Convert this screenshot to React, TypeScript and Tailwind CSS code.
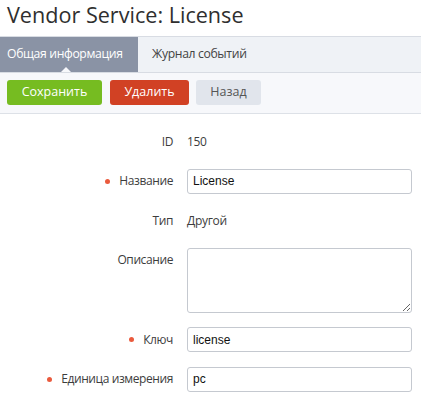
import React from "react";

type Field = {
  label: string;
  required?: boolean;
  value?: string;
  kind: "text" | "input" | "textarea";
};

const fields: Field[] = [
  { label: "ID", value: "150", kind: "text" },
  { label: "Название", value: "License", kind: "input", required: true },
  { label: "Тип", value: "Другой", kind: "text" },
  { label: "Описание", value: "", kind: "textarea" },
  { label: "Ключ", value: "license", kind: "input", required: true },
  { label: "Единица измерения", value: "pc", kind: "input", required: true },
];

const FieldRow = ({ field }: { field: Field }) => {
  return (
    <div className="flex items-start">
      <div className="w-[173px] h-[25px] flex items-center justify-end text-[12px] tracking-[-0.4px] text-[#3d3d3d]">
        {field.required && (
          <span className="w-[5px] h-[5px] rounded-full bg-[#ea5a3d] mr-[9px]"></span>
        )}
        <span>{field.label}</span>
      </div>
      <div className="ml-[14px] w-[225px]">
        {field.kind === "text" && (
          <div className="h-[25px] flex items-center text-[12px] tracking-[-0.3px] text-[#3d3d3d]">{field.value}</div>
        )}
        {field.kind === "input" && (
          <input
            className="block w-full h-[25px] px-[5px] border border-[#c5c9d0] rounded-[3px] bg-white text-[12px] text-[#111] font-['Liberation_Sans',Arial,sans-serif] outline-none"
            defaultValue={field.value}
          />
        )}
        {field.kind === "textarea" && (
          <textarea
            className="block w-full h-[65px] px-[5px] py-[3px] border border-[#c5c9d0] rounded-[3px] bg-white text-[12px] outline-none"
            defaultValue={field.value}
          />
        )}
      </div>
    </div>
  );
};

export default function App() {
  return (
    <div className="w-[421px] h-[401px] overflow-hidden bg-white font-['Open_Sans',sans-serif]">
      <h1 className="h-[36px] pl-[7px] text-[21.6px] leading-[30px] text-[#2f2f2f]">
        Vendor Service: License
      </h1>

      <div className="flex h-[37px] bg-[#eff2f6] border-y border-[#d8dce3]">
        <div className="relative w-[138px] flex items-center pl-[7px] bg-[#8a93a5] text-white text-[12.2px] tracking-[-0.35px]">
          Общая информация
          <span className="absolute bottom-0 left-[61px] w-0 h-0 border-x-[5px] border-x-transparent border-b-[5px] border-b-[#f7f8fb]"></span>
        </div>
        <div className="flex items-center pl-[14px] text-[12.2px] tracking-[-0.35px] text-[#444]">Журнал событий</div>
      </div>

      <div className="flex gap-[8px] px-[7px] pt-[7px] pb-[8px] bg-[#f7f8fb] border-b border-[#dde1e7]">
        <button className="w-[95px] h-[25px] rounded-[3px] bg-[#76bc21] text-white text-[12.5px]">Сохранить</button>
        <button className="w-[79px] h-[25px] rounded-[3px] bg-[#d14124] text-white text-[12.5px]">Удалить</button>
        <button className="w-[65px] h-[25px] rounded-[3px] bg-[#e1e5ec] text-[#555] text-[12.5px] -ml-[1px]">Назад</button>
      </div>

      <div className="flex flex-col gap-[14.5px] pt-[15px]">
        {fields.map((f) => (
          <FieldRow key={f.label} field={f} />
        ))}
      </div>
    </div>
  );
}
